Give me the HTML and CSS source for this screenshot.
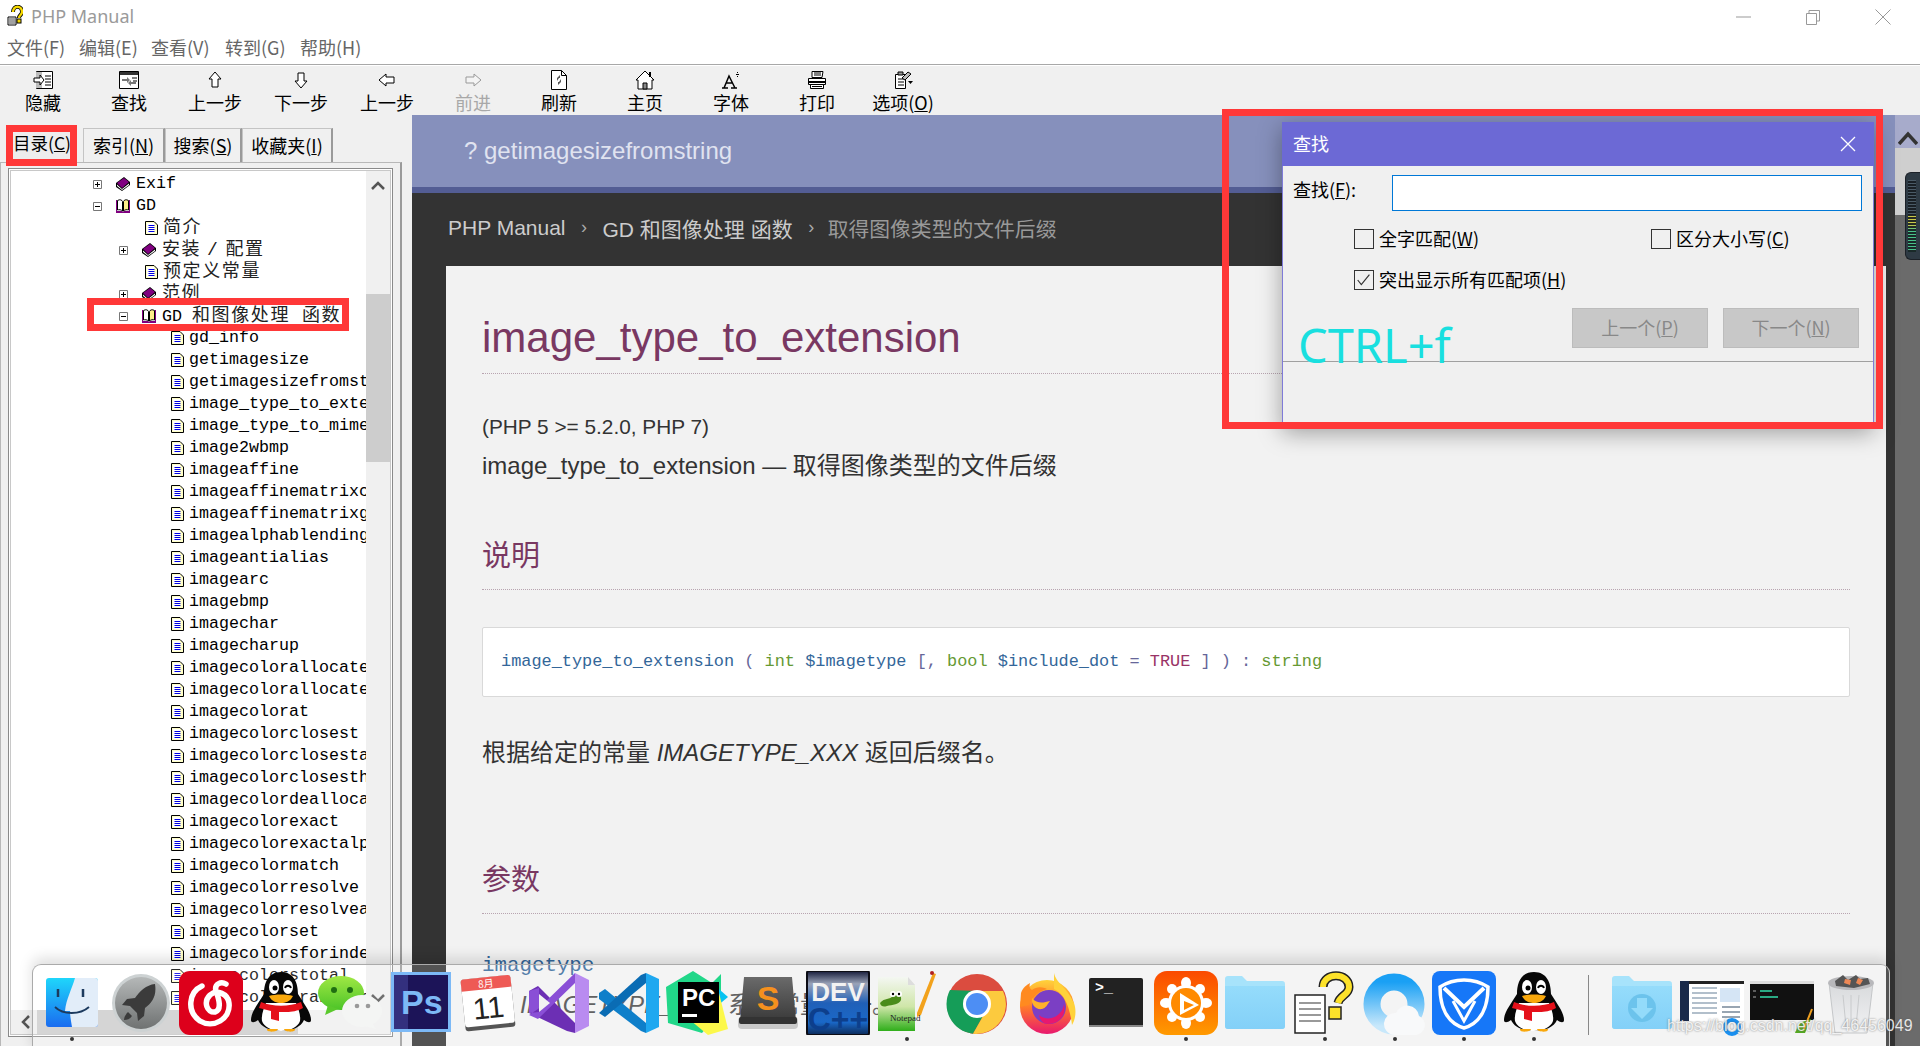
FILE: index.html
```html
<!DOCTYPE html>
<html lang="zh-CN">
<head>
<meta charset="utf-8">
<title>PHP Manual</title>
<link rel="stylesheet" href="styles.css">
</head>
<body>
<svg class="defs" aria-hidden="true">
  <defs>
    <linearGradient id="gFinder" x1="0" y1="0" x2="0" y2="1"><stop offset="0" stop-color="#1fd6fb"/><stop offset="1" stop-color="#1a6cf0"/></linearGradient>
    <linearGradient id="gLaunch" x1="0" y1="0" x2="0" y2="1"><stop offset="0" stop-color="#b5b8b8"/><stop offset="1" stop-color="#6f7272"/></linearGradient>
    <linearGradient id="gWechat" x1="0" y1="0" x2="0" y2="1"><stop offset="0" stop-color="#a0e844"/><stop offset="1" stop-color="#4cc428"/></linearGradient>
    <linearGradient id="gFolder" x1="0" y1="0" x2="0" y2="1"><stop offset="0" stop-color="#95dcfb"/><stop offset="1" stop-color="#83d0f8"/></linearGradient>
    <linearGradient id="gPlayer" x1="0" y1="0" x2="0" y2="1"><stop offset="0" stop-color="#fb4a00"/><stop offset="1" stop-color="#ff9a00"/></linearGradient>
    <linearGradient id="gDev" x1="0" y1="0" x2="0" y2="1"><stop offset="0" stop-color="#161b3a"/><stop offset=".2" stop-color="#9aa3b8"/><stop offset=".5" stop-color="#2060b8"/><stop offset=".8" stop-color="#1a68c8"/><stop offset="1" stop-color="#0c2a58"/></linearGradient>
    <linearGradient id="gNote" x1="0" y1="0" x2="0" y2="1"><stop offset="0" stop-color="#f4f7f2"/><stop offset=".55" stop-color="#cfe6a8"/><stop offset="1" stop-color="#2fae1a"/></linearGradient>
    <linearGradient id="gFox" x1="0" y1="0" x2="0" y2="1"><stop offset="0" stop-color="#ffd23a"/><stop offset=".5" stop-color="#ff7a2a"/><stop offset="1" stop-color="#e8186e"/></linearGradient>
    <linearGradient id="gQb" x1="0" y1="0" x2="0" y2="1"><stop offset="0" stop-color="#1aa0f4"/><stop offset="1" stop-color="#c8e8fb"/></linearGradient>
    <linearGradient id="gSub" x1="0" y1="0" x2="0" y2="1"><stop offset="0" stop-color="#6a6a6a"/><stop offset="1" stop-color="#3a3a3a"/></linearGradient>
    <linearGradient id="gTrash" x1="0" y1="0" x2="0" y2="1"><stop offset="0" stop-color="#d8dadc"/><stop offset="1" stop-color="#f2f3f4"/></linearGradient>
    <symbol id="i-bookc" viewBox="0 0 16 16"><path d="M1 7 9 1l6 5v3L7 15 1 11Z" fill="#000"/><path d="M2 7 9 2l5 4-7 6Z" fill="#800080"/><path d="M2 8.500 7 13l7-5.500V9L7 14 2 10Z" fill="#fff"/></symbol>
    <symbol id="i-booko" viewBox="0 0 16 16"><path d="M1 2h1v11h5l1 1 1-1h5V2h1v13H1Z" fill="#800080"/><path d="M2.500 2.500 C5 1 7 2 7.500 3.500V13C6 11.500 4 11.500 2.500 12Z" fill="#fff" stroke="#000" stroke-width="1"/><path d="M8.500 3.500C9 2 11 1 13.500 2.500V12C12 11.500 10 11.500 8.500 13Z" fill="#ffef8a" stroke="#000" stroke-width="1"/></symbol>
    <symbol id="i-page" viewBox="0 0 13 14"><path d="M.5.500H9L12.500 4V13.500H.5Z" fill="#ffffc8" stroke="#000"/><path d="M2 2h7v10H2Z" fill="#fff"/><path d="M3.500 4h6v1h-6ZM3.500 6h6v1h-6ZM3.500 8h6v1h-6ZM3.500 10h6v1h-6Z" fill="#0000e0"/></symbol>
    <symbol id="i-plus" viewBox="0 0 9 9"><path d="M.5.500h8v8h-8Z" fill="#fff" stroke="#777"/><path d="M2 4h5v1H2ZM4 2h1v5H4Z" fill="#000"/></symbol>
    <symbol id="i-minus" viewBox="0 0 9 9"><path d="M.5.500h8v8h-8Z" fill="#fff" stroke="#777"/><path d="M2 4h5v1H2Z" fill="#000"/></symbol>
    <symbol id="i-qq" viewBox="0 0 64 64">
      <path d="M32 1C19 1 15 12 15 23C9 33 2 41 2 49c0 3 3 3 7 0 3 7 12 11 23 11s20-4 23-11c4 3 7 3 7 0 0-8-7-16-13-26C49 12 45 1 32 1Z" fill="#070707"/>
      <path d="M17 32c-2 5-5 12-4 18 2 6 10 10 19 10s17-4 19-10c1-6-2-13-4-18Z" fill="#fff"/>
      <ellipse cx="25" cy="16" rx="5" ry="7" fill="#fff"/><ellipse cx="39" cy="16" rx="5" ry="7" fill="#fff"/>
      <circle cx="26" cy="17" r="2.500" fill="#000"/><path d="M36 17c1-3 5-3 6 0" fill="none" stroke="#000" stroke-width="1.800"/>
      <path d="M20 25c6-2 18-2 24 0-3 6-8 7-12 7s-9-1-12-7Z" fill="#f9a80c"/>
      <path d="M12 31c12 5 28 5 40 0l2 6c-5 3-12 4-16 4h-8v9l-8-2v-8c-4-1-8-2-12-3Z" fill="#e5101a"/>
      <path d="M18 58h11c0 3-12 4-11 0ZM35 58h11c1 4-11 3-11 0Z" fill="#f9a80c"/>
    </symbol>
    <symbol id="i-folder" viewBox="0 0 64 64">
      <path d="M2 8a3 3 0 0 1 3-3h14l5 5h35a3 3 0 0 1 3 3v42a3 3 0 0 1-3 3H5a3 3 0 0 1-3-3Z" fill="#a7e3fb"/>
      <path d="M2 15h60v40a3 3 0 0 1-3 3H5a3 3 0 0 1-3-3Z" fill="url(#gFolder)"/>
    </symbol>
  </defs>
</svg>

<div class="app">
  <header class="titlebar">
    <div class="title-row">
      <svg class="app-icon" viewBox="0 0 16 22"><path d="M1 12h8v8H1Z" fill="#fff" stroke="#000"/><path d="M2 14h6M2 16h6M2 18h6" stroke="#444"/><path d="M6 7c0-7 9-7 9 0 0 3-3 3-3 6" fill="none" stroke="#000" stroke-width="4"/><path d="M6 7c0-7 9-7 9 0 0 3-3 3-3 6" fill="none" stroke="#f6d900" stroke-width="2.400"/><rect x="10" y="14" width="4" height="4" fill="#f6d900" stroke="#000"/></svg>
      <span class="app-name">PHP Manual</span>
      <div class="win-ctrls">
        <svg class="wc wc-min" viewBox="0 0 16 16"><path d="M0 8h15" stroke="#999"/></svg>
        <svg class="wc wc-max" viewBox="0 0 16 16"><path d="M1.500 4.500h10v11h-10ZM4 4V1.500h10.500V12H12" fill="none" stroke="#999"/></svg>
        <svg class="wc wc-close" viewBox="0 0 16 16"><path d="M.5.500l15 15M15.500.500l-15 15" stroke="#999"/></svg>
      </div>
    </div>
    <nav class="menu">
      <span class="menu-a">文件(F)</span><span class="menu-b">编辑(E)</span><span class="menu-c">查看(V)</span><span class="menu-d">转到(G)</span><span>帮助(H)</span>
    </nav>
  </header>

  <div class="toolbar">
    <div class="tool"><svg viewBox="0 0 20 18"><path d="M3.500.500h16v17h-16Z" fill="#fff" stroke="#000"/><path d="M3 1h6v16H3Z" fill="#bbb"/><path d="M12 5h6M12 8h6M12 11h6M12 14h6" stroke="#000"/><path d="M1 7h6V4l4 5-4 5v-3H1Z" fill="#fff" stroke="#000"/></svg><span>隐藏</span></div>
    <div class="tool"><svg viewBox="0 0 20 18"><path d="M.5.500h19v17H.5Z" fill="#fff" stroke="#000"/><path d="M1 1h18v3H1Z" fill="#333"/><path d="M3 8h5V6l3 3-3 3v-2H3ZM17 11h-5V9L9 12l3 3v-2h5Z" fill="#777"/><path d="M13 7h5M14 10h4" stroke="#000"/></svg><span>查找</span></div>
    <div class="tool"><svg viewBox="0 0 20 18"><path d="M10 1 16 8h-3v8H7V8H4Z" fill="#fff" stroke="#000"/></svg><span>上一步</span></div>
    <div class="tool"><svg viewBox="0 0 20 18"><path d="M10 17 4 10h3V2h6v8h3Z" fill="#fff" stroke="#000"/></svg><span>下一步</span></div>
    <div class="tool"><svg viewBox="0 0 20 18"><path d="M2 9 9 3v3h8v6H9v3Z" fill="#fff" stroke="#000"/></svg><span>上一步</span></div>
    <div class="tool tool-off"><svg viewBox="0 0 20 18"><path d="M18 9 11 3v3H3v6h8v3Z" fill="#f4f4f4" stroke="#999"/></svg><span>前进</span></div>
    <div class="tool"><svg viewBox="0 0 20 20"><path d="M2.500.500h10l5 5v14h-15Z" fill="#fff" stroke="#000"/><path d="M12.500.500v5h5" fill="none" stroke="#000"/><path d="M11 5 8 8v3l2-3h1ZM9 15l3-3V9l-2 3H9Z" fill="#555"/></svg><span>刷新</span></div>
    <div class="tool"><svg viewBox="0 0 20 20"><path d="M1 10 10 1l9 9h-2v9H3v-9Z" fill="#fff" stroke="#000"/><path d="M14 2h2v5h-2Z" fill="#000"/><path d="M8 13h4v6H8Z" fill="#888" stroke="#000"/></svg><span>主页</span></div>
    <div class="tool"><svg viewBox="0 0 20 18"><path d="M1 17h6M10 17h6M3 17 8 5l6 12M5 12h6" fill="none" stroke="#000" stroke-width="1.500"/><path d="M15 3h3v1h-3ZM16 1h1v1h-1ZM16 5h1v1h-1Z" fill="#000"/></svg><span>字体</span></div>
    <div class="tool"><svg viewBox="0 0 20 18"><path d="M5 .500h11l-1 6H5Z" fill="#fff" stroke="#000"/><path d="M1.500 7.500h17v6h-17Z" fill="#fff" stroke="#000"/><path d="M2 10h16v2H2Z" fill="#000"/><path d="M3.500 13.500h13v4h-13Z" fill="#fff" stroke="#000"/><path d="M7 2h7M7 4h7M5 15.500h10" stroke="#000"/></svg><span>打印</span></div>
    <div class="tool"><svg viewBox="0 0 20 18"><path d="M2.500 3.500h10v14h-10Z" fill="#fff" stroke="#000"/><path d="M5 1h5v3H5Z" fill="#999" stroke="#000"/><path d="M5 8h6M5 11h6M5 14h6" stroke="#000"/><path d="M9 7l6-6 3 2-6 6Z" fill="#bbb" stroke="#000"/><path d="M15 10h5l-2.500 3Z" fill="#000"/></svg><span>选项(<u>O</u>)</span></div>
  </div>

  <div class="workspace">
    <aside class="left">
      <div class="tabs">
        <div class="tab tab-active">目录(<u>C</u>)</div>
        <div class="tab tab-2">索引(<u>N</u>)</div>
        <div class="tab tab-3">搜索(<u>S</u>)</div>
        <div class="tab tab-4">收藏夹(<u>I</u>)</div>
      </div>
      <div class="tabpane">
        <div class="tree">
          <div class="tree-main">
            <div class="tree-list">
              <div class="row lv1"><svg class="box"><use href="#i-plus"/></svg><svg class="book"><use href="#i-bookc"/></svg><span>Exif</span></div>
              <div class="row lv1"><svg class="box"><use href="#i-minus"/></svg><svg class="book"><use href="#i-booko"/></svg><span>GD</span></div>
              <div class="row lv2-leaf"><svg class="page"><use href="#i-page"/></svg><span class="cjk">简介</span></div>
              <div class="row lv2"><svg class="box"><use href="#i-plus"/></svg><svg class="book"><use href="#i-bookc"/></svg><span class="cjk">安装 / 配置</span></div>
              <div class="row lv2-leaf"><svg class="page"><use href="#i-page"/></svg><span class="cjk">预定义常量</span></div>
              <div class="row lv2"><svg class="box"><use href="#i-plus"/></svg><svg class="book"><use href="#i-bookc"/></svg><span class="cjk">范例</span></div>
              <div class="row lv2"><svg class="box"><use href="#i-minus"/></svg><svg class="book"><use href="#i-booko"/></svg><span>GD <b class="cjk">和图像处理</b> <b class="cjk cjk-end">函数</b></span></div>
              <div class="row lv3"><svg class="page"><use href="#i-page"/></svg><span>gd_info</span></div>
              <div class="row lv3"><svg class="page"><use href="#i-page"/></svg><span>getimagesize</span></div>
              <div class="row lv3"><svg class="page"><use href="#i-page"/></svg><span>getimagesizefromstring</span></div>
              <div class="row lv3"><svg class="page"><use href="#i-page"/></svg><span>image_type_to_extension</span></div>
              <div class="row lv3"><svg class="page"><use href="#i-page"/></svg><span>image_type_to_mime_type</span></div>
              <div class="row lv3"><svg class="page"><use href="#i-page"/></svg><span>image2wbmp</span></div>
              <div class="row lv3"><svg class="page"><use href="#i-page"/></svg><span>imageaffine</span></div>
              <div class="row lv3"><svg class="page"><use href="#i-page"/></svg><span>imageaffinematrixconcat</span></div>
              <div class="row lv3"><svg class="page"><use href="#i-page"/></svg><span>imageaffinematrixget</span></div>
              <div class="row lv3"><svg class="page"><use href="#i-page"/></svg><span>imagealphablending</span></div>
              <div class="row lv3"><svg class="page"><use href="#i-page"/></svg><span>imageantialias</span></div>
              <div class="row lv3"><svg class="page"><use href="#i-page"/></svg><span>imagearc</span></div>
              <div class="row lv3"><svg class="page"><use href="#i-page"/></svg><span>imagebmp</span></div>
              <div class="row lv3"><svg class="page"><use href="#i-page"/></svg><span>imagechar</span></div>
              <div class="row lv3"><svg class="page"><use href="#i-page"/></svg><span>imagecharup</span></div>
              <div class="row lv3"><svg class="page"><use href="#i-page"/></svg><span>imagecolorallocate</span></div>
              <div class="row lv3"><svg class="page"><use href="#i-page"/></svg><span>imagecolorallocatealpha</span></div>
              <div class="row lv3"><svg class="page"><use href="#i-page"/></svg><span>imagecolorat</span></div>
              <div class="row lv3"><svg class="page"><use href="#i-page"/></svg><span>imagecolorclosest</span></div>
              <div class="row lv3"><svg class="page"><use href="#i-page"/></svg><span>imagecolorclosestalpha</span></div>
              <div class="row lv3"><svg class="page"><use href="#i-page"/></svg><span>imagecolorclosesthwb</span></div>
              <div class="row lv3"><svg class="page"><use href="#i-page"/></svg><span>imagecolordeallocate</span></div>
              <div class="row lv3"><svg class="page"><use href="#i-page"/></svg><span>imagecolorexact</span></div>
              <div class="row lv3"><svg class="page"><use href="#i-page"/></svg><span>imagecolorexactalpha</span></div>
              <div class="row lv3"><svg class="page"><use href="#i-page"/></svg><span>imagecolormatch</span></div>
              <div class="row lv3"><svg class="page"><use href="#i-page"/></svg><span>imagecolorresolve</span></div>
              <div class="row lv3"><svg class="page"><use href="#i-page"/></svg><span>imagecolorresolvealpha</span></div>
              <div class="row lv3"><svg class="page"><use href="#i-page"/></svg><span>imagecolorset</span></div>
              <div class="row lv3"><svg class="page"><use href="#i-page"/></svg><span>imagecolorsforindex</span></div>
              <div class="row lv3"><svg class="page"><use href="#i-page"/></svg><span>imagecolorstotal</span></div>
              <div class="row lv3"><svg class="page"><use href="#i-page"/></svg><span>imagecolortransparent</span></div>
            </div>
            <div class="hbar">
              <svg class="hbar-arrow" viewBox="0 0 10 14"><path d="M8 1 2 7l6 6" fill="none" stroke="#555" stroke-width="2.500"/></svg>
              <div class="hbar-thumb"></div>
            </div>
          </div>
          <div class="vbar">
            <svg class="vbar-arrow" viewBox="0 0 14 10"><path d="M1 8l6-6 6 6" fill="none" stroke="#555" stroke-width="2.500"/></svg>
            <div class="vbar-thumb"></div>
            <svg class="vbar-arrow vbar-down" viewBox="0 0 14 10"><path d="M1 2l6 6 6-6" fill="none" stroke="#555" stroke-width="2.500"/></svg>
          </div>
        </div>
      </div>
    </aside>

    <main class="doc">
      <div class="doc-col">
        <div class="doc-head">? getimagesizefromstring</div>
        <div class="crumbs"><span>PHP Manual</span><i>›</i><span>GD 和图像处理 函数</span><i>›</i><span class="crumb-now">取得图像类型的文件后缀</span></div>
        <article class="paper">
          <h1>image_type_to_extension</h1>
          <p class="ver">(PHP 5 &gt;= 5.2.0, PHP 7)</p>
          <p class="sub">image_type_to_extension — 取得图像类型的文件后缀</p>
          <h2 class="h-desc">说明</h2>
          <div class="code"><span class="c-fn">image_type_to_extension</span> <span class="c-p">(</span> <span class="c-t">int</span> <span class="c-fn">$imagetype</span> <span class="c-p">[,</span> <span class="c-t">bool</span> <span class="c-fn">$include_dot</span> <span class="c-p">=</span> <span class="c-k">TRUE</span> <span class="c-p">] ) :</span> <span class="c-t">string</span></div>
          <p class="para">根据给定的常量 <em>IMAGETYPE_XXX</em> 返回后缀名。</p>
          <h2 class="h-params">参数</h2>
          <div class="param">imagetype</div>
          <p class="param-desc"><em>IMAGETYPE_XXX</em> 系列常量之一。</p>
        </article>
      </div>
      <div class="doc-scroll">
        <div class="ds-top"><svg viewBox="0 0 20 14"><path d="M1 13 10 3l9 10" fill="none" stroke="#333" stroke-width="3.500"/></svg></div>
        <div class="ds-thumb"></div>
      </div>
    </main>
  </div>

  <div class="meter"><div class="meter-led"></div></div>

  <section class="dialog">
    <div class="dlg-title"><span>查找</span><svg viewBox="0 0 16 16"><path d="M1 1l14 14M15 1 1 15" stroke="#fff" stroke-width="1.300"/></svg></div>
    <div class="dlg-find"><label>查找(<u>F</u>):</label><div class="dlg-input"></div></div>
    <div class="dlg-opts">
      <div class="chk"><span class="chk-box"></span><span>全字匹配(<u>W</u>)</span></div>
      <div class="chk"><span class="chk-box"></span><span>区分大小写(<u>C</u>)</span></div>
    </div>
    <div class="dlg-opts dlg-opts-2">
      <div class="chk"><span class="chk-box"><svg viewBox="0 0 20 20"><path d="M3 10l4 5 9-11" fill="none" stroke="#333" stroke-width="1.300"/></svg></span><span>突出显示所有匹配项(<u>H</u>)</span></div>
    </div>
    <div class="dlg-btns"><div class="dlg-btn">上一个(<u>P</u>)</div><div class="dlg-btn">下一个(<u>N</u>)</div></div>
    <div class="dlg-rule"></div>
    <div class="ctrlf">CTRL+f</div>
  </section>

  <div class="mark mark-tab"></div>
  <div class="mark mark-row"></div>
  <div class="mark mark-dlg"></div>

  <footer class="dock">
    <div class="dock-item dot"><svg viewBox="0 0 64 64"><rect x="6" y="7" width="52" height="49" rx="3" fill="url(#gFinder)"/><path d="M35 7h20a3 3 0 0 1 3 3v43a3 3 0 0 1-3 3H32c-1-6-2-11-2-16h-5c1-12 7-22 10-33Z" fill="#e2edf9"/><path d="M18 18v8M43 18v8" stroke="#1c3a5e" stroke-width="2.500"/><path d="M15 36c8 8 25 8 34 0" fill="none" stroke="#1c3a5e" stroke-width="1.800"/></svg></div>
    <div class="dock-item"><svg viewBox="0 0 64 64"><circle cx="32" cy="32" r="29" fill="#cdd2d3"/><circle cx="32" cy="32" r="26" fill="url(#gLaunch)"/><path d="M46 13c-9 1-15 7-20 14l-8 1-5 6 8 1 7 7 1 8 6-5 1-8c7-5 12-12 10-24Z" fill="#3b3b3b"/><path d="M19 41c-3 3-4 6-4 8 3 0 6-1 8-4Z" fill="#3b3b3b"/></svg></div>
    <div class="dock-item"><svg viewBox="0 0 64 64"><rect width="64" height="64" rx="11" fill="#dd001b"/><path d="M23 15C10 21 7 40 21 50c13 8 31-2 29-18-1-9-12-14-19-8-7 7-3 18 5 17 7-2 4-13 1-21-2-7 5-10 10-7" fill="none" stroke="#fff" stroke-width="5.500" stroke-linecap="round"/></svg></div>
    <div class="dock-item"><svg viewBox="0 0 64 64"><use href="#i-qq"/></svg></div>
    <div class="dock-item"><svg viewBox="0 0 64 64"><ellipse cx="23" cy="22" rx="23" ry="17" fill="url(#gWechat)"/><path d="M10 34 7 44l13-6Z" fill="#5ac92c"/><circle cx="16" cy="19" r="3" fill="#1f6e12"/><circle cx="32" cy="19" r="3" fill="#1f6e12"/><ellipse cx="44" cy="40" rx="20" ry="16" fill="#f4f5f4"/><path d="M54 52l4 6-11-3Z" fill="#f4f5f4"/><circle cx="39" cy="35" r="2.300" fill="#999"/><circle cx="50" cy="35" r="2.300" fill="#999"/></svg></div>
    <div class="dock-item"><svg viewBox="0 0 64 64"><rect x="3" y="1" width="60" height="60" fill="#7cb9f6"/><rect x="6" y="4" width="54" height="54" fill="#1c1458"/><rect x="6" y="4" width="14" height="54" fill="#33307e"/><text x="13" y="43" class="svg-ps">Ps</text></svg></div>
    <div class="dock-item"><svg viewBox="0 0 64 64"><g transform="rotate(-6 32 32)"><rect x="6" y="6" width="50" height="52" rx="3" fill="#555"/><rect x="6" y="6" width="50" height="48" rx="3" fill="#fff"/><path d="M6 9a3 3 0 0 1 3-3h44a3 3 0 0 1 3 3v9H6Z" fill="#ee5a55"/><text x="31" y="16" class="svg-cal-m">8月</text><text x="31" y="47" class="svg-cal-d">11</text></g></svg></div>
    <div class="dock-item"><svg viewBox="0 0 64 64"><path d="M2 20 11 15 48 52V62L40 60 2 42Z" fill="#6c2fb4"/><path d="M2 42V20l10-3v24ZM11 48 48 12V2L11 38l-9 6Z" fill="#8a4fd6"/><path d="M48 2 62 9V55L48 62Z" fill="#b98bf0"/><path d="M12 23 23 32 12 41Z" fill="#f2f2f2"/></svg></div>
    <div class="dock-item"><svg viewBox="0 0 64 64"><path d="M2 22 8 18 49 52V62L44 60 2 28Z" fill="#0e7fca"/><path d="M2 42 44 4 49 2V12L8 46Z" fill="#0a6cb4"/><path d="M49 2 62 8V56L49 62Z" fill="#1fa8f0"/></svg></div>
    <div class="dock-item"><svg viewBox="0 0 64 64"><path d="M27 0 46 12 55 3V40L36 62 2 52 0 16Z" fill="#21d789"/><path d="M46 12 62 26 50 36Z" fill="#07c3f2"/><path d="M18 44 53 22 62 58 42 64Z" fill="#fcf84a"/><rect x="12" y="11" width="41" height="41" fill="#000"/><text x="16" y="35" class="svg-pc">PC</text><rect x="16" y="43" width="15" height="3" fill="#fff"/></svg></div>
    <div class="dock-item"><svg viewBox="0 0 64 64"><rect x="2" y="46" width="60" height="12" rx="4" fill="#c9c9c9"/><path d="M8 6h48l4 44H4Z" fill="url(#gSub)"/><rect x="3" y="46" width="58" height="7" rx="2" fill="#333"/><text x="32" y="39" class="svg-sub">S</text></svg></div>
    <div class="dock-item"><svg viewBox="0 0 64 64"><rect x="1" width="62" height="64" rx="2" fill="url(#gDev)"/><rect x="1" y="0" width="62" height="64" rx="2" fill="none" stroke="#0c0c14" stroke-width="2"/><text x="32" y="30" class="svg-dev">DEV</text><text x="32" y="59" class="svg-cpp">C++</text></svg></div>
    <div class="dock-item dot"><svg viewBox="0 0 64 64"><path d="M3 6h30l7 8v46H3Z" fill="url(#gNote)"/><path d="M33 6v8h7" fill="#ddd"/><path d="M42 42 58 2l3 1-15 41-4 2Z" fill="#f2a21c"/><circle cx="57" cy="2" r="2" fill="#b02020"/><path d="M5 32c5-6 9-2 14-8 4-2 8 0 7 5-1 4-9 5-14 6-3 1-6 1-7-3Z" fill="#4a8c1a"/><circle cx="18" cy="23" r="3" fill="#fff"/><circle cx="24" cy="23" r="3" fill="#fff"/><circle cx="18" cy="23" r="1.200"/><circle cx="24" cy="23" r="1.200"/><text x="15" y="50" class="svg-np">Notepad</text></svg></div>
    <div class="dock-item"><svg viewBox="0 0 64 64"><circle cx="32" cy="33" r="30" fill="#db4c3f"/><path d="M5 19A30 30 0 0 0 28 62.800L42 38 32 20Z" fill="#159d58"/><path d="M32 20H58A30 30 0 0 1 28 62.800L42 38Z" fill="#fcca3e"/><circle cx="32" cy="33" r="14" fill="#fff"/><circle cx="32" cy="33" r="11" fill="#4d8ef4"/></svg></div>
    <div class="dock-item"><svg viewBox="0 0 64 64"><circle cx="32" cy="36" r="27" fill="url(#gFox)"/><path d="M39 2c2 10 13 14 20 30 3 9 1 17-2 22-2-18-8-32-18-36Z" fill="#ffd23a"/><path d="M6 22c2-6 6-8 9-10-1 4 0 6 2 7 5-4 11-3 15-1-8 2-15 8-18 16L5 36Z" fill="#ff8a20"/><circle cx="34" cy="36" r="17" fill="#7b3fc4"/><path d="M17 27c5 6 11 5 18 3-3 4-4 7-8 8-6 1-11-4-10-11Z" fill="#ffb12a"/><path d="M24 44c9 8 24 1 25-11 3 12-6 20-16 20-5 0-8-4-9-9Z" fill="#e8186e"/></svg></div>
    <div class="dock-item"><svg viewBox="0 0 64 64"><rect x="5" y="7" width="54" height="49" rx="2" fill="#222"/><rect x="5" y="54" width="54" height="2" fill="#888"/><text x="11" y="21" class="svg-term">&gt;_</text></svg></div>
    <div class="dock-item dot"><svg viewBox="0 0 64 64"><rect width="64" height="64" rx="13" fill="url(#gPlayer)"/><g fill="#fff"><ellipse cx="32" cy="12" rx="5" ry="6"/><ellipse cx="32" cy="52" rx="5" ry="6"/><ellipse cx="12" cy="32" rx="6" ry="5"/><ellipse cx="52" cy="32" rx="6" ry="5"/><ellipse cx="18" cy="18" rx="5" ry="5"/><ellipse cx="46" cy="18" rx="5" ry="5"/><ellipse cx="18" cy="46" rx="5" ry="5"/><ellipse cx="46" cy="46" rx="5" ry="5"/></g><circle cx="32" cy="32" r="18" fill="#fff"/><circle cx="32" cy="32" r="15" fill="#ff8a00"/><path d="M26 22 45 34 26 44Z" fill="#fff"/><path d="M30 30 40 34 30 39Z" fill="#ff8a00"/></svg></div>
    <div class="dock-item"><svg viewBox="0 0 64 64"><use href="#i-folder"/></svg></div>
    <div class="dock-item dot"><svg viewBox="0 0 64 64"><rect x="2" y="24" width="30" height="38" fill="#fff" stroke="#222" stroke-width="1.500"/><path d="M6 32h22M6 38h22M6 44h22M6 50h22" stroke="#999" stroke-width="2"/><path d="M30 16c0-15 26-15 26 0 0 8-9 8-11 16" fill="none" stroke="#222" stroke-width="9"/><path d="M30 16c0-15 26-15 26 0 0 8-9 8-11 16" fill="none" stroke="#fde22a" stroke-width="6"/><rect x="36" y="36" width="12" height="12" fill="#fde22a" stroke="#222" stroke-width="1.500"/></svg></div>
    <div class="dock-item dot"><svg viewBox="0 0 64 64"><circle cx="31" cy="33" r="22" fill="none" stroke="url(#gQb)" stroke-width="17"/><path d="M31 64h22a10 10 0 0 0 3-19 12 12 0 0 0-23-3 11 11 0 0 0-2 22Z" fill="#f8f9fa"/></svg></div>
    <div class="dock-item dot"><svg viewBox="0 0 64 64"><rect width="64" height="64" rx="8" fill="#1677f8"/><path d="M32 9c9 0 18 3 24 7 0 20-7 36-24 41C15 52 8 36 8 16c6-4 15-7 24-7Z" fill="none" stroke="#fff" stroke-width="3.500"/><path d="M12 17 32 36 52 17" fill="none" stroke="#fff" stroke-width="4"/><path d="M21 30 32 50 43 30" fill="none" stroke="#fff" stroke-width="3"/></svg></div>
    <div class="dock-item dot"><svg viewBox="0 0 64 64"><use href="#i-qq"/></svg></div>
    <div class="dock-sep"></div>
    <div class="dock-item"><svg viewBox="0 0 64 64"><use href="#i-folder"/><circle cx="32" cy="37" r="14" fill="#6cc3ec"/><path d="M27 27h10v10h6L32 48 21 37h6Z" fill="#93dbfa"/></svg></div>
    <div class="dock-item"><svg class="svg-over" viewBox="0 0 64 64"><rect y="10" width="64" height="40" fill="#fff"/><rect y="10" width="9" height="40" fill="#1a2a4a"/><rect x="9" y="10" width="55" height="3" fill="#222"/><path d="M12 17h25M12 22h25M12 27h25M12 32h25M12 37h25M12 42h25" stroke="#9ab" stroke-width="1.500"/><rect x="40" y="17" width="20" height="14" fill="#d5e5f5"/><path d="M42 36h18M42 41h18M42 46h18" stroke="#789" stroke-width="1.500"/><circle cx="52" cy="56" r="7" fill="none" stroke="#1a90f0" stroke-width="4"/></svg></div>
    <div class="dock-item"><svg class="svg-over" viewBox="0 0 64 64"><rect y="10" width="64" height="7" fill="#ddd"/><rect y="13" width="64" height="36" fill="#111"/><path d="M10 20h12M10 26h18" stroke="#3da" stroke-width="1.500"/><path d="M3 20h3M3 26h3" stroke="#777" stroke-width="1.500"/><path d="M45 62l4-10 12-4-6 14Z" fill="#5a2"/><path d="M54 58 62 38" stroke="#f0a020" stroke-width="2"/></svg></div>
    <div class="dock-item"><svg viewBox="0 0 64 64"><path d="M10 12h44l-6 50H16Z" fill="url(#gTrash)" stroke="#c4c6c8"/><ellipse cx="32" cy="12" rx="23" ry="7" fill="#b8b8bb"/><path d="M16 10l8-6 5 5 8-5 4 4 8-1 2 6-16 4-18-2Z" fill="#555"/><path d="M26 8l6 1-1 5-6-2ZM39 7l5 2-3 5-4-2Z" fill="#e85"/><path d="M24 24l3 32M32 24v32M40 24l-3 32" stroke="#c8cacc"/></svg></div>
    <div class="watermark">https://blog.csdn.net/qq_46456049</div>
  </footer>
</div>
</body>
</html>
```

FILE: styles.css
```css
* { box-sizing: border-box; }
html, body { margin: 0; padding: 0; height: 1046px; overflow: hidden; }
body { font-family: "Noto Sans", "Noto Sans CJK SC", sans-serif; background: #f0f0f0; }
.defs { position: absolute; width: 0; height: 0; }
.app { position: relative; width: 1920px; height: 1046px; overflow: hidden; display: flex; flex-direction: column; }

/* Title + menu */
.titlebar { height: 65px; background: #fff; border-bottom: 1px solid #a8a8a8; flex: none; }
.title-row { height: 32px; display: flex; align-items: center; padding-left: 7px; }
.app-icon { width: 16px; height: 22px; flex: none; }
.app-name { margin-left: 8px; font-size: 18px; color: #9a9a9a; }
.win-ctrls { margin-left: auto; margin-top: 2px; display: flex; align-items: center; }
.wc { width: 16px; height: 16px; display: block; }
.wc-min { margin-right: 53px; }
.wc-max { margin-right: 54px; }
.wc-close { margin-right: 29px; }
.menu { height: 30px; display: flex; align-items: center; padding-left: 7px; font-size: 18px; color: #666; font-family: "Noto Sans CJK SC", sans-serif; }
.menu span { display: block; line-height: 28px; }
.menu-a { width: 72px; } .menu-b { width: 72px; } .menu-c { width: 74px; } .menu-d { width: 75px; }

/* Toolbar */
.toolbar { height: 50px; flex: none; display: flex; background: #f0f0f0; border-top: 1px solid #fff; font-family: "Noto Sans CJK SC", sans-serif; }
.tool { width: 86px; flex: none; display: flex; flex-direction: column; align-items: center; font-size: 18px; color: #000; padding-top: 4px; }
.tool svg { width: 20px; height: 20px; display: block; flex: none; }
.tool span { display: block; line-height: 24px; white-space: nowrap; }
.tool-off { color: #a8a8a8; }

/* Workspace */
.workspace { flex: 1; display: flex; min-height: 0; }
.left { width: 412px; flex: none; background: #f0f0f0; display: flex; flex-direction: column; border-right: 4px solid #f0f0f0; }
.tabs { height: 47px; flex: none; display: flex; padding: 13px 0 0 8px; font-family: "Noto Sans CJK SC", sans-serif; font-size: 18px; color: #000; }
.tab { height: 34px; padding-bottom: 2px; display: flex; align-items: center; justify-content: center; border: 1px solid #c4c4c4; border-bottom: 0; border-right: 2px solid #9a9a9a; white-space: pre; }
.tab u { text-decoration: underline; }
.tab-active { width: 68px; height: 36px; margin-top: -2px; margin-right: 7px; padding-bottom: 4px; background: #ededed; border: 0; font-size: 17.5px; }
.tab-2 { width: 82px; }
.tab-3 { width: 77px; }
.tab-4 { width: 91px; }
.tabpane { flex: 1; min-height: 0; border: 1px solid #b8b8b8; border-right: 2px solid #9a9a9a; border-bottom: 0; margin-right: 6px; padding: 5px 7px 9px 7px; }
.tree { height: 100%; display: flex; border: 1px solid #8a8a8a; outline: 1px solid #c8c8c8; outline-offset: -3px; padding: 2px; background: #fff; }
.tree-main { flex: 1; min-width: 0; display: flex; flex-direction: column; }
.tree-list { flex: 1; min-height: 0; overflow: hidden; padding-top: 2px; font-family: "Liberation Mono", "Noto Sans CJK SC", monospace; font-size: 16.67px; color: #000; }
.row { height: 22px; display: flex; align-items: center; white-space: nowrap; }
.row > span { display: block; line-height: 22px; }
.cjk { font-family: "Liberation Mono", "Noto Sans CJK SC", monospace; font-size: 18px; font-weight: 400; letter-spacing: 1.6px; word-spacing: -6.5px; color: #222; }
.cjk-end { margin-left: 2px; }
.box { width: 9px; height: 9px; flex: none; }
.book { width: 16px; height: 16px; flex: none; margin-left: 13px; margin-right: 5px; }
.page { width: 13px; height: 14px; flex: none; margin-right: 5px; }
.lv1 { padding-left: 82px; }
.lv2 { padding-left: 108px; }
.lv2-leaf { padding-left: 134px; }
.lv3 { padding-left: 160px; }
.hbar { height: 24px; flex: none; background: #f0f0f0; display: flex; align-items: center; position: relative; }
.hbar-arrow { width: 10px; height: 14px; margin-left: 10px; }
.hbar-thumb { width: 261px; height: 24px; margin-left: 6px; background: #cdcdcd; }
.vbar { width: 24px; flex: none; background: #f0f0f0; display: flex; flex-direction: column; align-items: center; }
.vbar-arrow { width: 14px; height: 10px; margin-top: 10px; flex: none; }
.vbar-down { margin-top: auto; margin-bottom: 31px; }
.vbar-thumb { width: 100%; height: 168px; margin-top: 103px; background: #cdcdcd; flex: none; }

/* Document */
.doc { flex: 1; min-width: 0; display: flex; }
.doc-col { flex: 1; min-width: 0; display: flex; flex-direction: column; background: #333; }
.doc-head { height: 78px; flex: none; background: #8690bc; border-bottom: 6px solid #535d94; padding: 0 0 0 52px; font-family: "Liberation Sans", "Noto Sans CJK SC", sans-serif; font-size: 24px; line-height: 72px; color: #e0e3f0; }
.crumbs { height: 73px; padding-bottom: 4px; flex: none; display: flex; align-items: center; padding-left: 36px; font-family: "Liberation Sans", "Noto Sans CJK SC", sans-serif; font-size: 21px; color: #ccc; }
.crumbs i { font-style: normal; width: 37px; text-align: center; font-size: 18px; color: #aaa; }
.crumb-now { margin-left: -2px; font-size: 20.8px; color: #999; }
.paper { flex: 1; min-height: 0; margin: 0 9px 0 34px; padding: 0 36px; background: #f2f2f2; font-family: "Liberation Sans", "Noto Sans CJK SC", sans-serif; color: #333; overflow: hidden; }
.paper h1 { margin: 0; padding: 44px 0 7px; font-size: 42px; line-height: 56px; font-weight: 400; color: #793862; border-bottom: 1px dotted #b8a4b0; }
.ver { margin: 38px 0 0; font-size: 20.8px; line-height: 30px; }
.sub { margin: 9px 0 0; font-size: 24px; line-height: 30px; }
.paper h2 { margin: 0; padding-bottom: 13px; font-size: 29px; line-height: 40px; font-weight: 400; color: #793862; border-bottom: 1px dotted #b8a4b0; }
.paper .h-desc { margin-top: 55px; }
.paper .h-params { margin-top: 92px; }
.code { margin-top: 37px; height: 70px; padding-left: 18px; background: #fff; border: 1px solid #d9d9d9; border-radius: 2px; font-family: "Liberation Mono", monospace; font-size: 16.9px; line-height: 68px; white-space: pre; }
.c-fn { color: #369; }
.c-t { color: #693; }
.c-k { color: #936; }
.c-p { color: #669; }
.para { margin: 41px 0 0; font-size: 24px; line-height: 30px; }
.param { margin-top: 37px; font-family: "Liberation Mono", monospace; font-size: 20.8px; line-height: 30px; color: #369; }
.param-desc { margin: 9px 0 0 38px; font-size: 24px; line-height: 30px; color: #444; }
.doc-scroll { width: 25px; flex: none; background: #6b6b6b; display: flex; flex-direction: column; }
.ds-top { height: 33px; flex: none; background: #a7abcb; display: flex; justify-content: center; align-items: flex-end; padding-bottom: 3px; }
.ds-top svg { width: 20px; height: 14px; display: block; }
.ds-thumb { height: 67px; flex: none; background: #cfcfcf; }

.meter { position: absolute; left: 1905px; top: 172px; width: 15px; height: 88px; background: #2e3a44; border-radius: 6px 0 0 6px; border: 1px solid #1c2128; border-right: 0; padding: 7px 2px; }
.meter-led { height: 100%; width: 8px; background: repeating-linear-gradient(to bottom, transparent 0 1px, rgba(20,25,30,.9) 1px 3px), linear-gradient(to bottom, #4a5a66 0 48%, #c8c84a 50% 62%, #49c08a 70% 100%); }

/* Find dialog */
.dialog { position: absolute; left: 1282px; top: 122px; width: 592px; height: 305px; background: #f0f0f0; border: 1px solid #7f7bd8; border-top: 0; box-shadow: 0 6px 22px rgba(0,0,0,.35); font-family: "Noto Sans CJK SC", sans-serif; font-size: 18px; color: #000; }
.dlg-title { height: 44px; margin: 0 -1px; padding: 0 18px 3px 11px; background: #6c69d5; color: #fff; display: flex; align-items: center; justify-content: space-between; }
.dlg-title svg { width: 16px; height: 16px; display: block; margin-top: 3px; }
.dlg-find { display: flex; align-items: flex-start; margin-top: 9px; padding-left: 10px; }
.dlg-find label { width: 99px; line-height: 28px; }
.dlg-input { width: 470px; height: 36px; background: #fff; border: 1px solid #0078d7; }
.dlg-opts { display: grid; grid-template-columns: 297px auto; margin-top: 18px; padding-left: 71px; }
.dlg-opts-2 { margin-top: 21px; }
.chk { display: flex; align-items: flex-start; height: 20px; white-space: pre; line-height: 18px; }
.chk-box { width: 20px; height: 20px; border: 1px solid #333; margin-right: 5px; flex: none; }
.chk-box svg { width: 18px; height: 18px; display: block; }
.dlg-btns { display: flex; justify-content: flex-end; gap: 15px; margin-top: 18px; padding-right: 14px; }
.dlg-btn { width: 136px; height: 40px; padding-bottom: 2px; background: #c8c8c8; border: 1px solid #bcbcbc; color: #888; display: flex; align-items: center; justify-content: center; white-space: pre; }
.dlg-rule { margin-top: 13px; border-top: 1px solid #a0a0a0; }
.ctrlf { position: absolute; left: 15px; top: 191px; font-family: "Noto Sans", sans-serif; font-size: 47px; line-height: 64px; color: #19dfdf; }

/* Annotation frames */
.mark { position: absolute; border: 7px solid #ff3838; }
.mark-tab { left: 6px; top: 125px; width: 71px; height: 41px; }
.mark-row { left: 87px; top: 298px; width: 262px; height: 33px; }
.mark-dlg { left: 1222px; top: 109px; width: 661px; height: 320px; }

/* Dock */
.dock { position: absolute; left: 32px; top: 964px; width: 1858px; height: 90px; padding: 6px 0 0 6.600px; display: flex; align-items: flex-start; gap: 5.650px; background: rgba(255,255,255,.16); border: 1px solid #aaa; border-bottom: 0; border-right-color: #ccc; border-radius: 9px 9px 0 0; box-shadow: 0 -6px 14px rgba(0,0,0,.13); }
.dock-item { width: 64px; flex: none; position: relative; }
.dock-item > svg { width: 64px; height: 64px; display: block; }
.svg-over { overflow: visible; }
.dot::after { content: ""; position: absolute; left: 30px; top: 66px; width: 4px; height: 4px; border-radius: 50%; background: #333; }
.dock-sep { width: 1px; height: 60px; margin: 4px 16px 0; background: #888; flex: none; }
.watermark { position: absolute; left: 1634px; top: 49px; font-family: "Liberation Sans", sans-serif; font-size: 16px; line-height: 24px; color: rgba(255,255,255,.85); text-shadow: 0 0 2px rgba(90,90,90,.8); white-space: nowrap; }

/* SVG text */
.svg-ps { font: 700 34px "Liberation Sans", sans-serif; fill: #7db9f6; }
.svg-cal-m { font: 400 10px "Noto Sans CJK SC", sans-serif; fill: #fff; text-anchor: middle; }
.svg-cal-d { font: 400 30px "Liberation Sans", sans-serif; fill: #222; text-anchor: middle; }
.svg-pc { font: 700 24px "Liberation Sans", sans-serif; fill: #fff; }
.svg-sub { font: 700 34px "Liberation Sans", sans-serif; fill: #f5901e; text-anchor: middle; }
.svg-dev { font: 700 26px "Liberation Sans", sans-serif; fill: #f2f2f2; text-anchor: middle; }
.svg-cpp { font: 700 32px "Liberation Sans", sans-serif; fill: #0d3f8c; text-anchor: middle; }
.svg-np { font: 400 9px "Liberation Serif", serif; fill: #222; }
.svg-term { font: 700 15px "Liberation Mono", monospace; fill: #fff; }
```
